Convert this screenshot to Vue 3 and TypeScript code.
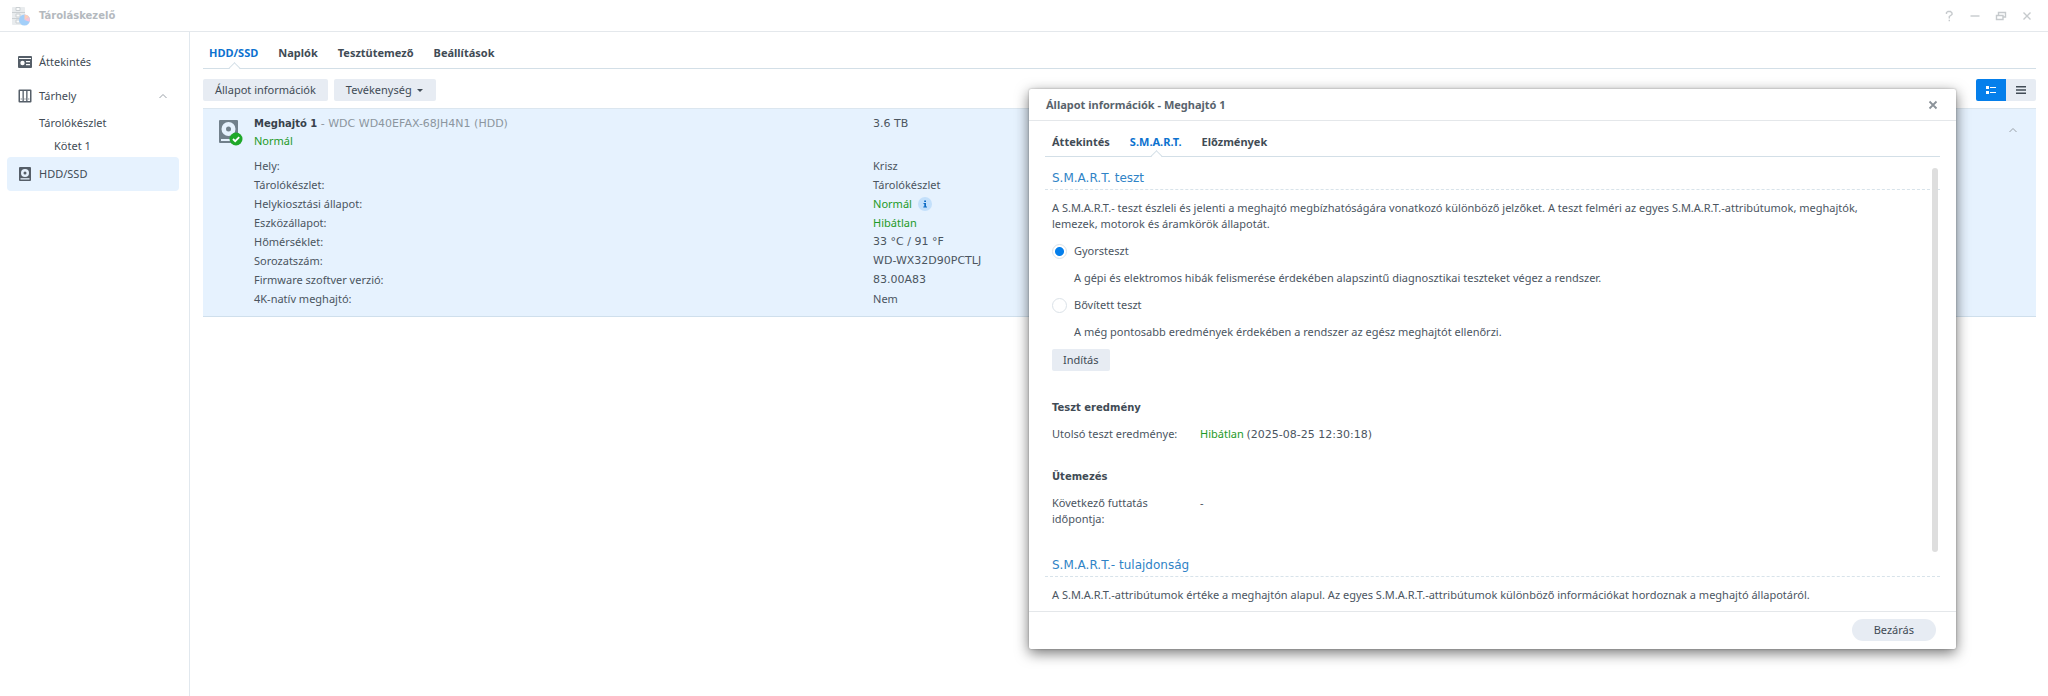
<script setup lang="ts">
import { ref } from 'vue'

interface DriveRow {
  label: string
  value: string
  ok?: boolean
  info?: boolean
  code?: boolean
}

const mainTabs: string[] = ['HDD/SSD', 'Naplók', 'Tesztütemező', 'Beállítások']
const dialogTabs: string[] = ['Áttekintés', 'S.M.A.R.T.', 'Előzmények']
const activeMain = ref('HDD/SSD')
const activeDialog = ref('S.M.A.R.T.')
const testType = ref('quick')

const rows: DriveRow[] = [
  { label: 'Hely:', value: 'Krisz' },
  { label: 'Tárolókészlet:', value: 'Tárolókészlet' },
  { label: 'Helykiosztási állapot:', value: 'Normál', ok: true, info: true },
  { label: 'Eszközállapot:', value: 'Hibátlan', ok: true },
  { label: 'Hőmérséklet:', value: '33 °C / 91 °F', code: true },
  { label: 'Sorozatszám:', value: 'WD-WX32D90PCTLJ', code: true },
  { label: 'Firmware szoftver verzió:', value: '83.00A83', code: true },
  { label: '4K-natív meghajtó:', value: 'Nem' },
]
</script>

<template>
  <div class="app">
    <header class="titlebar">
      <svg class="app-icon" viewBox="0 0 20 20" aria-hidden="true">
        <path d="M1 2a1 1 0 0 1 1-1h11a1 1 0 0 1 1 1v16a1 1 0 0 1-1 1H2a1 1 0 0 1-1-1z" fill="#d5dade" />
        <path d="M1 6.500h13M1 12.500h13M5 1.500h4v3H5zM5 8h4v3H5zM5 14h4v3H5z" fill="#f6f8f9" stroke="#98a2a9" />
        <circle cx="13.500" cy="14" r="5.500" fill="#4aa0f5" />
        <path d="M13.500 14V8.500a5.500 5.500 0 0 1 4.800 2.800z" fill="#ff9d76" />
        <path d="M13.500 14l4.800-2.700a5.500 5.500 0 0 1 .4 4.500z" fill="#f08bb4" />
      </svg>
      <h1 class="app-title">Tároláskezelő</h1>
      <div class="window-controls">
        <button type="button" class="win-btn" aria-label="Súgó">
          <svg viewBox="0 0 12 12"><path d="M3.500 4V2.500L5 1.500h2.500L9 3v1.500L6.300 6.500V8.500M6.300 9.800v1.400" /></svg>
        </button>
        <button type="button" class="win-btn" aria-label="Kis méret">
          <svg viewBox="0 0 12 12"><path d="M1.500 6h9" /></svg>
        </button>
        <button type="button" class="win-btn" aria-label="Előző méret">
          <svg viewBox="0 0 12 12"><path d="M1.500 5.500h6.500v4H1.500zM3.500 5V2.500h7v4.500H8.500" /></svg>
        </button>
        <button type="button" class="win-btn" aria-label="Bezárás">
          <svg viewBox="0 0 12 12"><path d="M2.500 2.500l7 7M9.500 2.500l-7 7" /></svg>
        </button>
      </div>
    </header>

    <div class="body">
      <nav class="sidebar">
        <a href="#" class="nav-item">
          <svg class="nav-icon" viewBox="0 0 16 16" aria-hidden="true">
            <rect x="1" y="2" width="14" height="12" rx="1" fill="#555e68" />
            <path d="M2 4h12v1H2z" fill="#fff" />
            <circle cx="5.500" cy="9" r="2.200" fill="#fff" />
            <path d="M9 7h4v1.200H9zM9 10h4v1.200H9z" fill="#fff" />
          </svg>
          Áttekintés
        </a>
        <a href="#" class="nav-item group">
          <svg class="nav-icon" viewBox="0 0 16 16" aria-hidden="true">
            <path fill-rule="evenodd" d="M2.500 1.500h11a1 1 0 0 1 1 1v11a1 1 0 0 1-1 1h-11a1 1 0 0 1-1-1v-11a1 1 0 0 1 1-1zM3 3v10h2.500V3zM6.800 3v10h2.400V3zM10.500 3v10H13V3z" fill="#555e68" />
            <path d="M3.700 11h1M7.500 11h1M11.300 11h1" stroke="#555e68" />
          </svg>
          <span class="grow">Tárhely</span>
          <svg class="chevron" viewBox="0 0 10 10" aria-hidden="true"><path d="M1.500 7L5 3.500 8.500 7" /></svg>
        </a>
        <a href="#" class="nav-item sub">Tárolókészlet</a>
        <a href="#" class="nav-item subsub">Kötet 1</a>
        <a href="#" class="nav-item selected">
          <svg class="nav-icon" viewBox="0 0 16 16" aria-hidden="true">
            <rect x="2" y="1" width="12" height="14" rx="1" fill="#555e68" />
            <circle cx="8" cy="7" r="4" fill="#e6f2fe" />
            <circle cx="8" cy="7" r="1.500" fill="#555e68" />
            <path d="M3.500 12.200h9v1.300h-9z" fill="#e6f2fe" />
          </svg>
          HDD/SSD
        </a>
      </nav>

      <main class="main">
        <div class="tabs" role="tablist">
          <button
            v-for="t in mainTabs"
            :key="t"
            type="button"
            role="tab"
            class="tab"
            :class="{ active: t === activeMain }"
            :aria-selected="t === activeMain"
            @click="activeMain = t"
          >{{ t }}</button>
        </div>

        <div class="toolbar">
          <button type="button" class="btn info-btn">Állapot információk</button>
          <button type="button" class="btn action-btn">Tevékenység<span class="caret"></span></button>
          <div class="view-switch">
            <button type="button" class="view-btn on" aria-label="Részletes nézet">
              <svg viewBox="0 0 12 10"><path d="M1 1h3v3H1zM1 6h3v3H1zM5 2h6v1H5zM5 7h6v1H5z" /></svg>
            </button>
            <button type="button" class="view-btn" aria-label="Lista nézet">
              <svg viewBox="0 0 12 10"><path d="M1 1h10v1.500H1zM1 4.200h10v1.500H1zM1 7.500h10V9H1z" /></svg>
            </button>
          </div>
        </div>

        <section class="drive">
          <svg class="drive-icon" viewBox="0 0 25 28" aria-hidden="true">
            <path d="M2 1h17a1 1 0 0 1 1 1v22H2a1 1 0 0 1-1-1V2a1 1 0 0 1 1-1z" fill="#71808b" />
            <circle cx="10.500" cy="10" r="7" fill="#e6f2fe" />
            <circle cx="10.500" cy="10" r="2.500" fill="#71808b" />
            <path d="M3 20h10v2H3z" fill="#e6f2fe" />
            <circle cx="18" cy="20" r="6.500" fill="#1fa829" />
            <path d="M15 20l2.200 2.200 4-4" fill="none" stroke="#fff" stroke-width="1.800" />
          </svg>
          <div class="drive-content">
            <div class="drive-head">
              <div>
                <h2 class="drive-name"><strong>Meghajtó 1</strong><span class="model"> - WDC WD40EFAX-68JH4N1 (HDD)</span></h2>
                <p class="drive-state ok">Normál</p>
              </div>
              <span class="capacity code">3.6 TB</span>
            </div>
            <dl class="details">
              <div v-for="r in rows" :key="r.label" class="detail">
                <dt>{{ r.label }}</dt>
                <dd :class="{ ok: r.ok, code: r.code }">
                  {{ r.value }}
                  <svg v-if="r.info" class="info" viewBox="0 0 14 14" aria-hidden="true">
                    <circle cx="7" cy="7" r="7" fill="#c3e0fb" />
                    <path d="M6.200 3.500h1.800v1.500H6.200zM5.500 6h2.500v3.500h1v1H5.300v-1h1V7h-.8z" fill="#0c6bc4" />
                  </svg>
                </dd>
              </div>
            </dl>
          </div>
          <button type="button" class="collapse" aria-label="Összecsukás">
            <svg class="chevron" viewBox="0 0 10 10"><path d="M1.500 7L5 3.500 8.500 7" /></svg>
          </button>
        </section>
      </main>
    </div>

    <section class="dialog" role="dialog" aria-labelledby="dialog-title">
      <header class="dialog-head">
        <h2 id="dialog-title">Állapot információk - Meghajtó 1</h2>
        <button type="button" class="dialog-close" aria-label="Ablak bezárása">
          <svg viewBox="0 0 12 12"><path d="M2.500 2.500l7 7M9.500 2.500l-7 7" /></svg>
        </button>
      </header>

      <div class="dialog-body">
        <div class="tabs dialog-tabs" role="tablist">
          <button
            v-for="t in dialogTabs"
            :key="t"
            type="button"
            role="tab"
            class="tab"
            :class="{ active: t === activeDialog }"
            :aria-selected="t === activeDialog"
            @click="activeDialog = t"
          >{{ t }}</button>
        </div>

        <div class="panel">
          <h3 class="section-title">S.M.A.R.T. teszt</h3>
          <p class="text">A S.M.A.R.T.- teszt észleli és jelenti a meghajtó megbízhatóságára vonatkozó különböző jelzőket. A teszt felméri az egyes S.M.A.R.T.-attribútumok, meghajtók, lemezek, motorok és áramkörök állapotát.</p>

          <label class="choice"><input v-model="testType" type="radio" name="test" value="quick" />Gyorsteszt</label>
          <p class="hint">A gépi és elektromos hibák felismerése érdekében alapszintű diagnosztikai teszteket végez a rendszer.</p>
          <label class="choice"><input v-model="testType" type="radio" name="test" value="extended" />Bővített teszt</label>
          <p class="hint">A még pontosabb eredmények érdekében a rendszer az egész meghajtót ellenőrzi.</p>
          <button type="button" class="btn start">Indítás</button>

          <h4 class="sub-title">Teszt eredmény</h4>
          <dl class="pair">
            <dt>Utolsó teszt eredménye:</dt>
            <dd><span class="ok">Hibátlan</span> <span class="code">(2025-08-25 12:30:18)</span></dd>
          </dl>

          <h4 class="sub-title">Ütemezés</h4>
          <dl class="pair">
            <dt>Következő futtatás időpontja:</dt>
            <dd>-</dd>
          </dl>

          <h3 class="section-title second">S.M.A.R.T.- tulajdonság</h3>
          <p class="text">A S.M.A.R.T.-attribútumok értéke a meghajtón alapul. Az egyes S.M.A.R.T.-attribútumok különböző információkat hordoznak a meghajtó állapotáról.</p>
          <div class="scrollbar"></div>
        </div>
      </div>

      <footer class="dialog-foot">
        <button type="button" class="btn close">Bezárás</button>
      </footer>
    </section>
  </div>
</template>

<style>
body {
  margin: 0;
  background: #fff;
}
</style>

<style scoped>
.app {
  position: relative;
  display: flex;
  flex-direction: column;
  min-height: 100vh;
  overflow: hidden;
  background: #fff;
  color: #4b555f;
  font-family: "Noto Sans", "DejaVu Sans", sans-serif;
  font-size: 11px;
  line-height: 16px;
}

* {
  box-sizing: border-box;
}

h1, h2, h3, h4, p, dl, dd {
  margin: 0;
  font-size: inherit;
}

button {
  padding: 0;
  border: 0;
  background: none;
  color: inherit;
  font: inherit;
  cursor: pointer;
}

.ok {
  color: #1c9a26;
}

.code {
  font-family: "DejaVu Sans", sans-serif;
}

.titlebar {
  display: flex;
  align-items: center;
  height: 32px;
  padding: 0 14px 0 11px;
  border-bottom: 1px solid #e4e8ec;
}

.app-icon {
  width: 20px;
  height: 20px;
  margin-right: 8px;
  opacity: 0.5;
}

.app-title {
  flex: 1;
  color: #b4b9be;
  font-family: "DejaVu Sans", sans-serif;
  font-size: 10px;
  font-weight: 700;
}

.window-controls {
  display: flex;
  gap: 12px;
}

.win-btn,
.dialog-close {
  display: flex;
  align-items: center;
  justify-content: center;
  width: 14px;
  height: 14px;
}

.win-btn svg,
.dialog-close svg {
  width: 12px;
  height: 12px;
  fill: none;
  stroke: #c6cacd;
  stroke-width: 1.4;
}

.body {
  display: flex;
  flex: 1;
}

.sidebar {
  width: 190px;
  padding: 13px 10px 0 7px;
  border-right: 1px solid #e1e8ee;
}

.nav-item {
  display: flex;
  align-items: center;
  height: 34px;
  padding: 0 11px 0 10px;
  border-radius: 4px;
  color: #414b55;
  text-decoration: none;
}

.nav-item.group {
  height: 33px;
}

.nav-item.sub {
  height: 22px;
  padding-left: 32px;
}

.nav-item.subsub {
  height: 23px;
  padding-left: 47px;
}

.nav-item.selected {
  background: #e6f2fe;
}

.nav-icon {
  width: 16px;
  height: 16px;
  margin-right: 6px;
}

.grow {
  flex: 1;
}

.chevron {
  width: 10px;
  height: 10px;
  fill: none;
  stroke: #9aa1a8;
}

.main {
  flex: 1;
  min-width: 0;
  padding: 10px 12px 0 13px;
}

.tabs {
  display: flex;
  gap: 20px;
  padding: 0 6px;
  border-bottom: 1px solid #d3dfe7;
}

.tab {
  position: relative;
  height: 26px;
  padding-bottom: 4px;
  color: #414b55;
  font-weight: 700;
}

.tab.active {
  color: #0c72cf;
}

.tab.active::after {
  position: absolute;
  bottom: -5px;
  left: 50%;
  width: 7px;
  height: 7px;
  margin-left: -4px;
  border: 1px solid #d3dfe7;
  border-right-color: transparent;
  border-bottom-color: transparent;
  background: linear-gradient(135deg, #fff 58%, transparent 58%);
  content: "";
  transform: rotate(45deg);
}

.toolbar {
  display: flex;
  gap: 6px;
  padding: 10px 0 7px;
}

.btn {
  height: 22px;
  border-radius: 2px;
  background: #e7ecf3;
  color: #414b55;
}

.info-btn {
  padding: 0 12px;
}

.action-btn {
  display: flex;
  align-items: center;
  gap: 5px;
  padding: 0 13px 0 12px;
}

.caret {
  border: 3px solid transparent;
  border-top-color: #414b55;
  border-bottom: 0;
}

.view-switch {
  display: flex;
  margin-left: auto;
  overflow: hidden;
  border-radius: 2px;
}

.view-btn {
  display: flex;
  align-items: center;
  justify-content: center;
  width: 30px;
  height: 22px;
  background: #e7ecf3;
}

.view-btn svg {
  width: 12px;
  height: 10px;
  fill: #414b55;
}

.view-btn.on {
  background: #057feb;
}

.view-btn.on svg {
  fill: #fff;
}

.drive {
  display: flex;
  align-items: flex-start;
  padding: 6px 18px 8px 15px;
  border-top: 1px solid #dbe6ef;
  border-bottom: 1px solid #cfdfec;
  background: #e6f2fe;
}

.drive-icon {
  width: 25px;
  height: 28px;
  margin: 4px 11px 0 0;
}

.drive-content {
  flex: 1;
}

.drive-head,
.detail {
  display: grid;
  grid-template-columns: 6fr 11fr;
}

.drive-head {
  margin-bottom: 7px;
}

.drive-name,
.capacity {
  line-height: 18px;
}

.drive-name {
  font-family: "DejaVu Sans", sans-serif;
  font-weight: 400;
}

.drive-name strong {
  color: #38424c;
  font-size: 10px;
}

.model {
  color: #8c969f;
}

.detail {
  line-height: 19px;
}

.detail dd {
  display: flex;
  align-items: center;
}

.info {
  width: 14px;
  height: 14px;
  margin-left: 6px;
}

.collapse {
  display: flex;
  margin-top: 10px;
}

.dialog {
  position: absolute;
  top: 89px;
  right: 92px;
  left: calc(50% + 5px);
  border-radius: 2px;
  background: #fff;
  box-shadow: 0 4px 14px rgba(0, 0, 0, 0.55), 0 0 2px rgba(0, 0, 0, 0.3);
}

.dialog-head {
  display: flex;
  align-items: center;
  justify-content: space-between;
  height: 32px;
  padding: 0 16px 0 17px;
  border-bottom: 1px solid #e4e7ea;
}

.dialog-head h2 {
  color: #59636c;
}

.dialog-close svg {
  stroke: #8b9299;
  stroke-width: 1.8;
}

.dialog-body {
  padding: 9px 16px 0;
}

.dialog-tabs {
  padding: 0 7px;
}

.dialog-tabs .tab {
  padding-bottom: 2px;
}

.panel {
  position: relative;
  padding: 12px 0 8px;
}

.section-title {
  padding: 0 7px 2px;
  border-bottom: 1px dashed #d8e3ea;
  color: #2f83c6;
  font-family: "DejaVu Sans", sans-serif;
  font-size: 12px;
  font-weight: 400;
  line-height: 18px;
}

.section-title.second {
  margin-top: 29px;
}

.text {
  margin: 10px 48px 0 7px;
}

.choice {
  display: flex;
  align-items: center;
  margin: 11px 0 0 7px;
}

.choice input {
  width: 15px;
  height: 15px;
  margin: 0 7px 0 0;
  border: 1px solid #dbe2e8;
  border-radius: 50%;
  background: #fff;
  appearance: none;
}

.choice input:checked {
  background: radial-gradient(circle, #057feb 4px, #fff 5px);
}

.hint {
  margin: 11px 0 0 29px;
}

.start {
  margin: 9px 0 0 7px;
  padding: 0 11px;
}

.sub-title {
  margin: 29px 0 0 7px;
  color: #414b55;
  font-family: "DejaVu Sans", sans-serif;
  font-size: 10px;
  font-weight: 700;
}

.pair {
  display: grid;
  grid-template-columns: 128px 1fr;
  column-gap: 20px;
  margin: 10px 0 0 7px;
}

.pair + .sub-title {
  margin-top: 26px;
}

.scrollbar {
  position: absolute;
  top: 11px;
  right: 2px;
  width: 6px;
  height: 384px;
  border-radius: 3px;
  background: #dedede;
}

.dialog-foot {
  display: flex;
  justify-content: flex-end;
  padding: 7px 20px 8px;
  border-top: 1px solid #e4e7ea;
}

.close {
  padding: 0 22px;
  border-radius: 11px;
}
</style>
